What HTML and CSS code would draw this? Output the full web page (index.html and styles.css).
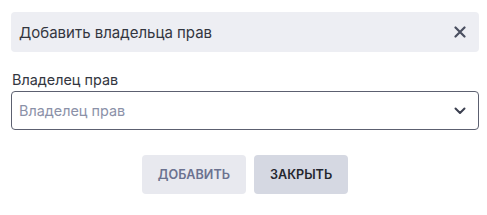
FILE: index.html
```html
<!DOCTYPE html>
<html lang="ru">
<head>
    <meta charset="UTF-8">
    <meta name="viewport" content="width=device-width, initial-scale=1.0">
    <title>Добавить владельца прав</title>
    <link rel="stylesheet" href="styles.css">
</head>
<body>
    <div class="dialog">
        <!-- Header -->
        <div class="dialog-header">
            <span class="dialog-title">Добавить владельца прав</span>
            <button class="close-btn" aria-label="Закрыть">
                <svg width="12" height="12" viewBox="0 0 12 12">
                    <path d="M1.5 1.5 L10.5 10.5 M10.5 1.5 L1.5 10.5" stroke="#4a4f60" stroke-width="2.2" stroke-linecap="round" fill="none"/>
                </svg>
            </button>
        </div>

        <!-- Field -->
        <div class="field">
            <label class="field-label" for="owner">Владелец прав</label>
            <div class="select" id="owner">
                <span class="select-placeholder">Владелец прав</span>
                <svg class="chevron" width="12" height="8" viewBox="0 0 12 8">
                    <path d="M1.5 1.5 L6 6 L10.5 1.5" stroke="#3c4050" stroke-width="2" stroke-linecap="round" stroke-linejoin="round" fill="none"/>
                </svg>
            </div>
        </div>

        <!-- Actions -->
        <div class="actions">
            <button class="btn btn-add">Добавить</button>
            <button class="btn btn-close">Закрыть</button>
        </div>
    </div>
</body>
</html>
```

FILE: styles.css
```css
/* General Styling */
body {
    margin: 0;
    background-color: #ffffff;
    font-family: Inter, "Noto Sans", sans-serif;
    color: #2c2f3a;
}

.dialog {
    padding: 12px 8px 0 11px;
}

.dialog-header {
    display: flex;
    align-items: center;
    justify-content: space-between;
    height: 40px;
    padding: 0 8px;
    background-color: #edeef3;
    border-radius: 4px;
}

.dialog-title {
    font-size: 15px;
    color: #33363f;
}

.close-btn {
    display: flex;
    align-items: center;
    justify-content: center;
    width: 20px;
    height: 20px;
    padding: 0;
    margin-right: 1px;
    border: none;
    background: none;
    cursor: pointer;
}

/* Field */
.field {
    margin-top: 18px;
}

.field-label {
    display: block;
    margin-left: 1px;
    font-size: 14.4px;
    line-height: 20px;
    color: #33363f;
}

.select {
    display: flex;
    align-items: center;
    justify-content: space-between;
    height: 37px;
    margin-top: 1px;
    padding: 0 12px 0 7px;
    border: 1px solid #5c6070;
    border-radius: 4px;
}

.select-placeholder {
    font-size: 14.4px;
    color: #8b91a8;
}

/* Actions */
.actions {
    display: flex;
    justify-content: center;
    gap: 8px;
    margin-top: 25px;
}

.btn {
    height: 39px;
    padding: 0 16px;
    border: none;
    border-radius: 4px;
    font-family: inherit;
    font-size: 12.6px;
    font-weight: 600;
    text-transform: uppercase;
    cursor: pointer;
}

.btn-add {
    background-color: #e8e9ef;
    color: #6b7290;
}

.btn-close {
    background-color: #d5d8e2;
    color: #24262e;
}
```
